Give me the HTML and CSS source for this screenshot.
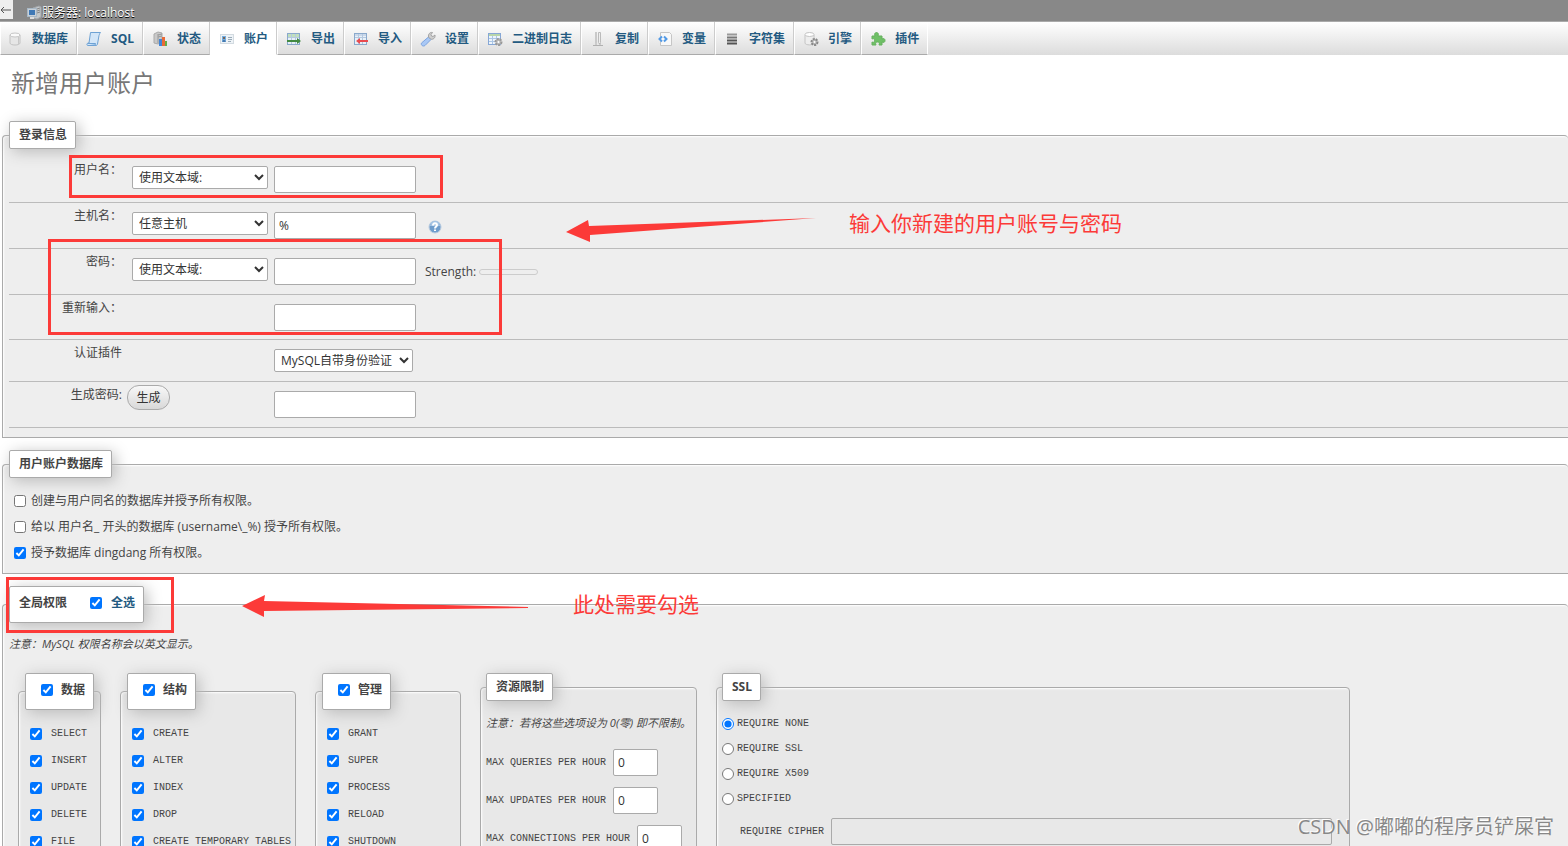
FILE: index.html
```html
<!DOCTYPE html>
<html lang="zh-CN">
<head>
<meta charset="utf-8">
<title>新增用户账户</title>
<link rel="stylesheet" href="styles.css">
</head>
<body>
<header class="serverbar">
  <button class="back" type="button" aria-label="返回"><svg width="12" height="10" viewBox="0 0 12 10"><path d="M11 5H1M4 2L1 5l3 3" fill="none" stroke="#555"/></svg></button>
  <a class="server" href="#">
    <svg width="16" height="16" viewBox="0 0 16 16"><path d="M7 3l6-2 2 1v10l-4 2-4-1z" fill="#c3c7ca" stroke="#a0a4a8"/><path d="M11 4l3-1M11 6l3-1M11 8l3-1" stroke="#888"/><rect x="1.500" y="3.500" width="9" height="8" fill="#c8d0d8" stroke="#a7b7c5"/><rect x="3" y="5" width="6" height="5" fill="#3f78b5"/><path d="M4 12h4v2H4z" fill="#ddd"/></svg>
    <span>服务器: localhost</span>
  </a>
</header>
<nav class="tabs">
  <a class="tab first" href="#"><svg width="16" height="16" viewBox="0 0 16 16"><path d="M3 4v8c0 2.700 10 2.700 10 0V4z" fill="#e6e6e6" stroke="#c2c2c2"/><ellipse cx="8" cy="4" rx="5" ry="2" fill="#fafafa" stroke="#c6c6c6"/><path d="M11.500 6v7" stroke="#c8c8c8"/></svg>数据库</a>
  <a class="tab" href="#"><svg width="16" height="16" viewBox="0 0 16 16"><path d="M4.500 1.500h10c-1 1-1 2-1.500 3l-1.500 8.500c-.2 1-.8 1.500-1.500 1.500H2c-1.500 0-1.500-2 0-2.500h1z" fill="#d3e6f8" stroke="#6ea2d4"/><path d="M2 12.500h7.500c-.5 1 0 2 .5 2" fill="#9cc4ea" stroke="#6ea2d4"/></svg>SQL</a>
  <a class="tab" href="#"><svg width="16" height="16" viewBox="0 0 16 16"><path d="M2 3l4-2 4 1v9l-4 2-4-1z" fill="#c9c9c9" stroke="#aaa"/><path d="M6 4l4-1M6 6l4-1M6 3v9" stroke="#999"/><path d="M7 8h3v7H7z" fill="#4186d8"/><path d="M10 6h3v9h-3z" fill="#e96b38"/><path d="M13 10h2v5h-2z" fill="#62ae46"/></svg>状态</a>
  <a class="tab active" href="#"><svg width="16" height="16" viewBox="0 0 16 16"><rect x="1.500" y="3.500" width="13" height="9" fill="#eef3f7" stroke="#d3dbe1"/><rect x="3" y="5" width="4" height="6" fill="#75aee0"/><circle cx="5" cy="7" r="1" fill="#754c31"/><path d="M3.500 11c0-3 3-3 3 0z" fill="#4779ae"/><path d="M9 6.500h4M9 8.500h4M9 10.500h3" stroke="#9aabb8"/></svg>账户</a>
  <a class="tab" href="#"><svg width="16" height="16" viewBox="0 0 16 16"><rect x="1.500" y="2.500" width="12" height="11" fill="#e7f0f8" stroke="#8aa9cc"/><path d="M2 3h11v3H2z" fill="#c0dfbc"/><path d="M2 6.500h11M5.500 3v10M9.500 3v10" stroke="#b5c9e0"/><path d="M1 9h10V7l4 3-4 3v-2H1z" fill="#438a43"/></svg>导出</a>
  <a class="tab" href="#"><svg width="16" height="16" viewBox="0 0 16 16"><rect x="1.500" y="2.500" width="12" height="11" fill="#e7f0f8" stroke="#8aa9cc"/><path d="M2 3h11v2H2z" fill="#cad8ea"/><path d="M2 6.500h11M5.500 3v10M9.500 3v10" stroke="#b5c9e0"/><path d="M15 9H7V7l-4 3 4 3v-2h8z" fill="#e94b4f"/></svg>导入</a>
  <a class="tab" href="#"><svg width="16" height="16" viewBox="0 0 16 16"><path d="M8.500 6l2.500 2.500-6 6c-2 1.500-4.500-.5-3.500-2.500z" fill="#a9c8f5" stroke="#7ba3df"/><path d="M8.500 6c-.5-3 1.500-5 4-4.500L11 3.500l.5 1.500 1.500.5 2-1.500c.5 3-2 5-4.500 4z" fill="#cfcfcf" stroke="#a2a2a2"/></svg>设置</a>
  <a class="tab" href="#"><svg width="16" height="16" viewBox="0 0 16 16"><rect x="1.500" y="2.500" width="12" height="11" fill="#edf4fb" stroke="#86a7d6"/><path d="M2 3h11v2H2z" fill="#b8d6aa"/><path d="M2 7.500h11M2 10.500h11M5.500 5v8M9.500 5v8" stroke="#abc6e5"/><circle cx="11.500" cy="11" r="3" fill="#bbb" stroke="#999" stroke-width="2" stroke-dasharray="2 1"/><circle cx="11.500" cy="11" r="1" fill="#fff"/></svg>二进制日志</a>
  <a class="tab" href="#"><svg width="16" height="16" viewBox="0 0 16 16"><path d="M5 1h2v11H5z" fill="#c9c9c9"/><path d="M8.500 1.500h2v10l-1 1.500-1-1.500z" fill="#eee" stroke="#bbb"/><path d="M3 14.500h10M6 12v2M10 12v2" stroke="#b0b0b0"/></svg>复制</a>
  <a class="tab" href="#"><svg width="16" height="16" viewBox="0 0 16 16"><path d="M3.500 1.500h9l2 2v11h-11z" fill="#f8f8f8" stroke="#c6c6c6"/><path d="M5 5.500L2.500 8 5 10.500M7 5.500L9.500 8 7 10.500" fill="none" stroke="#529ae6" stroke-width="2"/></svg>变量</a>
  <a class="tab" href="#"><svg width="16" height="16" viewBox="0 0 16 16"><path d="M3 3.500h10" stroke="#999" stroke-width="2"/><path d="M3 6.500h10" stroke="#777" stroke-width="2"/><path d="M3 9.500h10M3 12.500h10" stroke="#555" stroke-width="2"/></svg>字符集</a>
  <a class="tab" href="#"><svg width="16" height="16" viewBox="0 0 16 16"><path d="M2 4v8c0 2.500 9 2.500 9 0V4z" fill="#eee" stroke="#c4c4c4"/><ellipse cx="6.500" cy="3.500" rx="4.500" ry="2" fill="#fff" stroke="#c4c4c4"/><circle cx="11.500" cy="11" r="3" fill="#bbb" stroke="#888" stroke-width="2" stroke-dasharray="2 1"/><circle cx="11.500" cy="11" r="1" fill="#fff"/></svg>引擎</a>
  <a class="tab" href="#"><svg width="16" height="16" viewBox="0 0 16 16"><path d="M2 5h3c-1-2 0-3.500 1.500-3.500S9 3 8 5h4v3c2-1 3 0 3 1.500S14 12 12 11v3H9c1-2 0-3-1.500-3S5 12 6 14H2v-3c2 1 2.500 0 2.500-1.500S4 7 2 8z" fill="#6fc066" stroke="#66b15f"/></svg>插件</a>
</nav>

<main class="page">
  <h1>新增用户账户</h1>

  <fieldset class="panel login">
    <legend>登录信息</legend>
    <div class="row">
      <label class="name" for="pred-user">用户名：</label>
      <select class="mode" id="pred-user"><option>使用文本域:</option></select>
      <input class="text" type="text" aria-label="用户名">
    </div>
    <div class="row">
      <label class="name" for="pred-host">主机名：</label>
      <select class="mode" id="pred-host"><option>任意主机</option></select>
      <input class="text" type="text" value="%" aria-label="主机名">
      <svg class="help" width="14" height="14" viewBox="0 0 14 14"><circle cx="7" cy="7" r="6" fill="#6f9dcc" stroke="#b9cce0"/><path d="M2 6a5 5 0 0110 0z" fill="#a5c4e4"/><path d="M5 5.500c0-3 4-3 4-.5C9 6.500 7 6.500 7 8.500M7 9.500v1.500" fill="none" stroke="#fff" stroke-width="2"/></svg>
    </div>
    <div class="row">
      <label class="name" for="pred-pass">密码：</label>
      <select class="mode" id="pred-pass"><option>使用文本域:</option></select>
      <input class="text" type="password" aria-label="密码">
      <div class="strength"><span>Strength:</span><span class="meter"></span></div>
    </div>
    <div class="row retype">
      <label class="name" for="retype">重新输入：</label>
      <span class="mode"></span>
      <input class="text" type="password" id="retype">
    </div>
    <div class="row">
      <label class="name" for="plugin">认证插件</label>
      <span class="mode"></span>
      <select class="plugin" id="plugin"><option>MySQL自带身份验证</option></select>
    </div>
    <div class="row">
      <label class="name" for="generated">生成密码:</label>
      <span class="mode"><button class="generate" type="button">生成</button></span>
      <input class="text" type="text" id="generated">
    </div>
  </fieldset>

  <fieldset class="panel databases">
    <legend>用户账户数据库</legend>
    <label class="option"><input type="checkbox">创建与用户同名的数据库并授予所有权限。</label>
    <label class="option"><input type="checkbox">给以 用户名_ 开头的数据库 (username\_%) 授予所有权限。</label>
    <label class="option"><input type="checkbox" checked>授予数据库 dingdang 所有权限。</label>
  </fieldset>

  <fieldset class="panel privileges">
    <legend class="tall">全局权限<label class="all"><input type="checkbox" checked>全选</label></legend>
    <p class="note">注意：MySQL 权限名称会以英文显示。</p>
    <div class="groups">
      <fieldset class="group data">
        <legend class="tall"><label class="pick"><input type="checkbox" checked>数据</label></legend>
        <label class="priv"><input type="checkbox" checked>SELECT</label>
        <label class="priv"><input type="checkbox" checked>INSERT</label>
        <label class="priv"><input type="checkbox" checked>UPDATE</label>
        <label class="priv"><input type="checkbox" checked>DELETE</label>
        <label class="priv"><input type="checkbox" checked>FILE</label>
      </fieldset>
      <fieldset class="group structure">
        <legend class="tall"><label class="pick"><input type="checkbox" checked>结构</label></legend>
        <label class="priv"><input type="checkbox" checked>CREATE</label>
        <label class="priv"><input type="checkbox" checked>ALTER</label>
        <label class="priv"><input type="checkbox" checked>INDEX</label>
        <label class="priv"><input type="checkbox" checked>DROP</label>
        <label class="priv"><input type="checkbox" checked>CREATE TEMPORARY TABLES</label>
      </fieldset>
      <fieldset class="group admin">
        <legend class="tall"><label class="pick"><input type="checkbox" checked>管理</label></legend>
        <label class="priv"><input type="checkbox" checked>GRANT</label>
        <label class="priv"><input type="checkbox" checked>SUPER</label>
        <label class="priv"><input type="checkbox" checked>PROCESS</label>
        <label class="priv"><input type="checkbox" checked>RELOAD</label>
        <label class="priv"><input type="checkbox" checked>SHUTDOWN</label>
      </fieldset>
      <fieldset class="group limits">
        <legend>资源限制</legend>
        <p class="note">注意：若将这些选项设为 0(零) 即不限制。</p>
        <label class="limit">MAX QUERIES PER HOUR<input type="text" value="0"></label>
        <label class="limit">MAX UPDATES PER HOUR<input type="text" value="0"></label>
        <label class="limit">MAX CONNECTIONS PER HOUR<input type="text" value="0"></label>
      </fieldset>
      <fieldset class="group ssl">
        <legend>SSL</legend>
        <label class="require"><input type="radio" name="ssl" checked>REQUIRE NONE</label>
        <label class="require"><input type="radio" name="ssl">REQUIRE SSL</label>
        <label class="require"><input type="radio" name="ssl">REQUIRE X509</label>
        <label class="require"><input type="radio" name="ssl">SPECIFIED</label>
        <label class="cipher">REQUIRE CIPHER<input type="text" disabled></label>
      </fieldset>
    </div>
  </fieldset>
</main>

<div class="mark mark-user"></div>
<div class="mark mark-password"></div>
<div class="mark mark-all"></div>
<svg class="arrow arrow-login" width="250" height="24" viewBox="0 0 250 24"><path d="M0 14L22 2l1 6L250 0 24 17v7z" fill="#fc3a38"/></svg>
<svg class="arrow arrow-all" width="286" height="22" viewBox="0 0 286 22"><path d="M0 11L23 0l-1 6 264 6v1l-264 3v6z" fill="#fc3a38"/></svg>
<p class="callout callout-login">输入你新建的用户账号与密码</p>
<p class="callout callout-all">此处需要勾选</p>
<p class="watermark">CSDN @嘟嘟的程序员铲屎官</p>
</body>
</html>
```
FILE: styles.css
```css
* {
  box-sizing: border-box;
}

body {
  position: relative;
  height: 100vh;
  margin: 0;
  overflow: hidden;
  background: #fff;
  color: #444;
  font: 12px/18px "Open Sans", "Noto Sans CJK SC", sans-serif;
}

input,
select,
button {
  margin: 0;
  color: #333;
  font: inherit;
}

a {
  color: #235a81;
  text-decoration: none;
}

p {
  margin: 0;
}

/* server bar and tabs */

.serverbar {
  display: flex;
  align-items: flex-start;
  gap: 13px;
  height: 22px;
  background: #888;
  border-bottom: 1px solid #aaa;
}

.back {
  display: flex;
  align-items: center;
  width: 13px;
  height: 19px;
  padding: 0;
  background: #eee;
  border: 0;
}

.server {
  display: flex;
  align-items: center;
  height: 26px;
  color: #fff;
  text-shadow: 0 1px 0 #000;
}

.tabs {
  display: flex;
  height: 33px;
  background: linear-gradient(#fff, #dcdcdc);
}

.tab {
  display: flex;
  align-items: center;
  gap: 9px;
  padding: 1px 8px 0;
  border-left: 1px solid #fff;
  border-right: 1px solid #ccc;
  border-bottom: 1px solid #aaa;
  font-weight: bold;
  white-space: nowrap;
}

.tab.first {
  padding-left: 6px;
}

.tab.active {
  background: #fff;
  border-bottom-color: #fff;
}

.tab:last-child {
  border-right-color: #fff;
}

/* panels */

.page {
  padding-left: 2px;
}

h1 {
  margin: 10px 0 20px 9px;
  color: #777;
  font-size: 24px;
  line-height: 36px;
  font-weight: 400;
}

fieldset {
  min-width: 0;
  margin: 0;
  border: 1px solid #aaa;
  border-radius: 4px 4px 0 0;
  box-shadow: 1px 1px 2px #fff inset;
}

.panel {
  margin-bottom: 12px;
  padding: 8px 0 9px 6px;
  background: #eee;
  border-right: 0;
}

legend {
  height: 28px;
  padding: 0 8px 0 9px;
  background: #fff;
  border: 1px solid #aaa;
  border-radius: 2px;
  box-shadow: 3px 3px 15px #bbb;
  color: #444;
  font-weight: bold;
  line-height: 26px;
  white-space: nowrap;
}

legend.tall {
  display: flex;
  align-items: flex-start;
  height: 37px;
  line-height: 32px;
}

.row {
  display: flex;
  align-items: flex-start;
  padding: 9px 0;
  border-bottom: 1px solid #bbb;
}

.row.retype {
  padding-bottom: 8px;
}

.name {
  width: 113px;
  height: 10px;
  margin-right: 10px;
  line-height: 8px;
  text-align: right;
}

.mode {
  width: 136px;
  height: 23px;
  margin-right: 6px;
}

select {
  height: 23px;
  padding: 0 2px;
  background: #fff;
  border: 1px solid #aaa;
  border-radius: 2px;
}

.plugin {
  width: 139px;
}

input[type="text"],
input[type="password"] {
  height: 27px;
  padding: 0 4px;
  background: #fff;
  border: 1px solid #aaa;
  border-radius: 2px;
}

.text {
  width: 142px;
}

.help {
  margin: 8px 0 0 12px;
}

.strength {
  display: flex;
  align-items: center;
  gap: 3px;
  height: 27px;
  margin-left: 9px;
}

.meter {
  width: 59px;
  height: 6px;
  border: 1px solid #ccc;
  border-radius: 3px;
}

.generate {
  display: block;
  width: 43px;
  height: 25px;
  margin: -6px 0 0 -5px;
  padding: 0;
  background: linear-gradient(#f8f8f8, #d8d8d8);
  border: 1px solid #aaa;
  border-radius: 12px;
}

input[type="checkbox"],
input[type="radio"] {
  flex: none;
  width: 12px;
  height: 12px;
}

.databases {
  padding-top: 10px;
  padding-bottom: 7px;
}

.option {
  display: flex;
  align-items: center;
  gap: 5px;
  height: 26px;
  padding-left: 5px;
}

/* privileges */

.privileges {
  padding-top: 12px;
}

.note {
  font-size: 11px;
  font-style: italic;
}

.all {
  display: flex;
  align-items: center;
  gap: 9px;
  margin-left: 23px;
  color: #235a81;
}

.pick {
  display: flex;
  align-items: center;
  gap: 8px;
  padding-left: 6px;
}

.groups {
  display: flex;
  gap: 19px;
  margin: 20px 0 0 9px;
}

.group {
  flex: none;
  padding: 10px 6px 60px;
  background: #e8e8e8;
}

.data {
  width: 83px;
}

.structure {
  width: 176px;
}

.admin {
  width: 146px;
}

.limits {
  width: 217px;
  padding-left: 5px;
}

.ssl {
  width: 634px;
  padding-left: 5px;
}

.priv,
.limit,
.require,
.cipher {
  display: flex;
  align-items: center;
  font-family: "Liberation Mono", monospace;
  font-size: 10px;
  white-space: nowrap;
}

.priv {
  gap: 9px;
  height: 27px;
  padding-left: 5px;
}

.limits .note {
  margin: 3px 0 17px;
  white-space: nowrap;
}

.limit {
  gap: 7px;
  margin-bottom: 11px;
}

.limit input {
  width: 45px;
  font: 12px/18px "Open Sans", sans-serif;
}

.require {
  gap: 3px;
  height: 25px;
}

.cipher {
  gap: 7px;
  margin-top: 7px;
  padding: 0 11px 0 18px;
}

.cipher input[type="text"] {
  flex: 1;
  background: #e8e8e8;
}

/* annotations laid over the page */

.mark,
.arrow,
.callout,
.watermark {
  position: absolute;
}

.mark {
  border: 3px solid #fc3a38;
}

.mark-user {
  left: 69px;
  top: 155px;
  width: 374px;
  height: 43px;
}

.mark-password {
  left: 48px;
  top: 239px;
  width: 454px;
  height: 96px;
}

.mark-all {
  left: 6px;
  top: 577px;
  width: 168px;
  height: 56px;
}

.arrow-login {
  left: 566px;
  top: 218px;
}

.arrow-all {
  left: 242px;
  top: 595px;
}

.callout {
  color: #fc3a38;
  font-size: 21px;
  line-height: 30px;
  white-space: nowrap;
}

.callout-login {
  left: 849px;
  top: 208px;
}

.callout-all {
  left: 573px;
  top: 589px;
}

.watermark {
  right: 14px;
  bottom: 4px;
  color: #888;
  font-size: 20px;
  line-height: 30px;
  text-shadow: -1px -1px 0 #fff;
  white-space: nowrap;
}
```
